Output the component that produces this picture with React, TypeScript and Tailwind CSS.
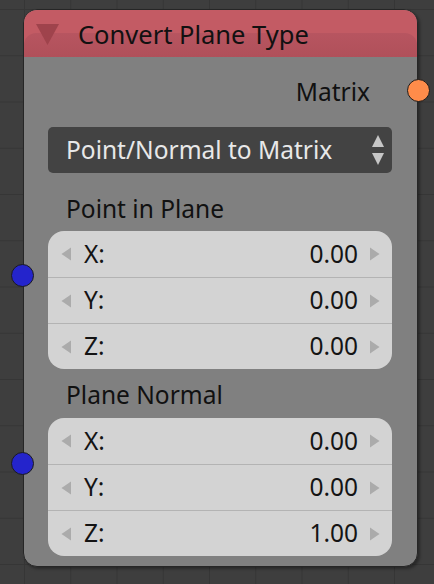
import React from "react";

interface VectorRow {
  axis: string;
  value: string;
}

const pointRows: VectorRow[] = [
  { axis: "X:", value: "0.00" },
  { axis: "Y:", value: "0.00" },
  { axis: "Z:", value: "0.00" },
];

const normalRows: VectorRow[] = [
  { axis: "X:", value: "0.00" },
  { axis: "Y:", value: "0.00" },
  { axis: "Z:", value: "1.00" },
];

const Socket = ({ color, className }: { color: string; className: string }) => (
  <div
    className={`absolute w-[23px] h-[23px] rounded-full border border-[#1c1c1c] ${color} ${className}`}
  />
);

const Arrow = ({ dir }: { dir: "left" | "right" }) => (
  <svg width="10" height="14" viewBox="0 0 10 14" className="shrink-0">
    {dir === "left" ? (
      <polygon points="10,0.5 10,13.5 0.5,7" fill="#ababab" />
    ) : (
      <polygon points="0,0.5 0,13.5 9.5,7" fill="#ababab" />
    )}
  </svg>
);

const VectorBox = ({ rows }: { rows: VectorRow[] }) => (
  <div className="flex flex-col rounded-[16px] bg-[#d3d3d3] overflow-hidden">
    {rows.map((row, i) => (
      <div
        key={row.axis}
        className={`flex items-center h-[46px] pl-[13px] pr-[12px] ${
          i > 0 ? "border-t border-[#b3b3b3]" : ""
        }`}
      >
        <Arrow dir="left" />
        <span className="ml-[13px] text-[#141414]">{row.axis}</span>
        <span className="ml-auto mr-[12px] text-[#141414]">{row.value}</span>
        <Arrow dir="right" />
      </div>
    ))}
  </div>
);

export default function App() {
  return (
    <div className="w-[434px] h-[584px] overflow-hidden bg-[#3e3e3e] bg-[linear-gradient(to_right,#363636_1px,transparent_1px),linear-gradient(to_bottom,#363636_1px,transparent_1px)] bg-[size:46.25px_46.25px] bg-[position:24px_9px] pl-[23px] pt-[9px] font-['Noto_Sans',sans-serif] text-[24.5px] leading-none">
      <div className="relative w-[395px] h-[558px] rounded-[14px] border border-[#262626] bg-[#808080] shadow-[2px_2px_3px_rgba(0,0,0,0.35)]">
        {/* header */}
        <div className="relative h-[47px] rounded-t-[13px] bg-[#c35b64] overflow-hidden">
          <div className="absolute left-0 right-0 top-[23px] bottom-0 rounded-t-[12px] bg-[linear-gradient(to_bottom,#b75560,#b0505a)]" />
          <div className="relative flex items-center h-full pl-[12px]">
            <svg width="24" height="22" viewBox="0 0 24 22">
              <polygon points="0,1 23,1 11.5,22" fill="#9f434c" />
            </svg>
            <span className="ml-[18px] text-[25.5px] text-[#111] pt-[2px]">Convert Plane Type</span>
          </div>
        </div>

        {/* body */}
        <div className="flex flex-col pl-[24px] pr-[25px]">
          <div className="flex items-center justify-end h-[70px] pr-[22px] text-[#111]">Matrix</div>

          <div className="flex items-center h-[46px] rounded-[5px] bg-[#434343] pl-[18px] pr-[7px]">
            <span className="text-[#e8e8e8]">Point/Normal to Matrix</span>
            <svg width="14" height="32" viewBox="0 0 14 32" className="ml-auto">
              <polygon points="7,1 13,13 1,13" fill="#c6c6c6" />
              <polygon points="1,19 13,19 7,31" fill="#c6c6c6" />
            </svg>
          </div>

          <div className="flex items-center h-[58px] pl-[18px] pt-[15px] text-[#111]">Point in Plane</div>
          <VectorBox rows={pointRows} />

          <div className="flex items-center h-[49px] pl-[18px] pt-[4px] text-[#111]">Plane Normal</div>
          <VectorBox rows={normalRows} />
        </div>

        <Socket color="bg-[#ff8c4a]" className="right-[-13px] top-[69px]" />
        <Socket color="bg-[#2424cc]" className="left-[-13px] top-[254px]" />
        <Socket color="bg-[#2424cc]" className="left-[-13px] top-[442px]" />
      </div>
    </div>
  );
}
